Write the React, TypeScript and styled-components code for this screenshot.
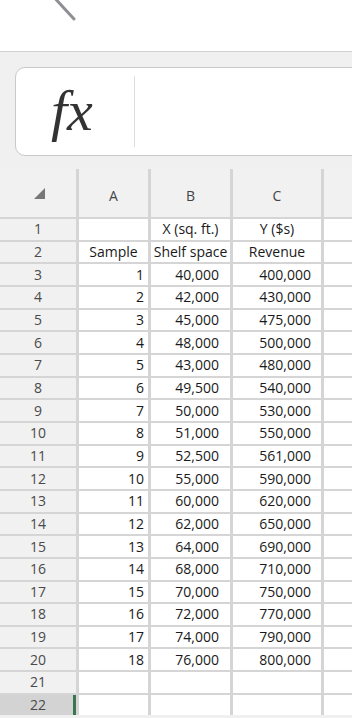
import React from "react";
import styled, { createGlobalStyle } from "styled-components";

const GlobalStyle = createGlobalStyle`
  html, body {
    margin: 0;
    padding: 0;
    background: #ffffff;
    overflow: hidden;
  }
  body {
    font-family: "Open Sans", "Noto Sans", sans-serif;
  }
`;

const Page = styled.div`
  width: 352px;
  height: 718px;
  overflow: hidden;
  display: flex;
  flex-direction: column;
  background: #f0f0f0;
`;

const TopBar = styled.div`
  height: 52px;
  flex-shrink: 0;
  background: #ffffff;
  border-bottom: 1px solid #d2d2d2;
  padding-left: 50px;
  box-sizing: border-box;
`;

const FormulaArea = styled.div`
  flex-shrink: 0;
  padding: 15px 0 13px 15px;
  display: flex;
`;

const FormulaBox = styled.div`
  width: 360px;
  flex-shrink: 0;
  height: 89px;
  box-sizing: border-box;
  background: #ffffff;
  border: 1.5px solid #c9c9c9;
  border-radius: 10px;
  display: flex;
  align-items: center;
`;

const FxLabel = styled.div`
  width: 118px;
  height: 100%;
  box-sizing: border-box;
  padding-left: 35px;
  padding-bottom: 2px;
  display: flex;
  align-items: center;
  font-family: "Liberation Serif", "DejaVu Serif", serif;
  font-style: italic;
  font-size: 58px;
  color: #333333;
`;

const Divider = styled.div`
  width: 1px;
  height: 71px;
  background: #dddddd;
`;

const Sheet = styled.div`
  display: grid;
  grid-template-columns: 76px 69px 79px 88px 1fr;
  grid-template-rows: 48px;
  grid-auto-rows: 20.67px;
  column-gap: 3px;
  row-gap: 2px;
  background: #d5d5d5;
  flex-shrink: 0;
`;

const Corner = styled.div`
  background: #f1f1f1;
  display: flex;
  align-items: center;
  justify-content: flex-start;
  padding-left: 34px;
`;

const ColHead = styled.div`
  background: #f1f1f1;
  color: #444444;
  font-size: 14px;
  display: flex;
  align-items: center;
  justify-content: center;
  padding-top: 4px;
`;

const RowHead = styled.div<{ $selected?: boolean }>`
  position: relative;
  background: ${(p) => (p.$selected ? "#d3d3d3" : "#f1f1f1")};
  color: #4a4a4a;
  font-size: 14px;
  display: flex;
  align-items: center;
  justify-content: center;
  line-height: 1;
  ${(p) =>
    p.$selected &&
    `
    &::after {
      content: "";
      position: absolute;
      right: 0;
      top: 0;
      bottom: 0;
      width: 3px;
      background: #3a7650;
    }
  `}
`;

const Cell = styled.div<{ $align?: "center" | "right"; $pad?: number }>`
  background: #ffffff;
  color: #1a1a1a;
  font-size: 14px;
  line-height: 1;
  display: flex;
  align-items: center;
  white-space: nowrap;
  overflow: hidden;
  justify-content: ${(p) => (p.$align === "right" ? "flex-end" : "center")};
  padding-right: ${(p) => (p.$align === "right" ? p.$pad ?? 4 : 0)}px;
`;

const data: [string, string][] = [
  ["40,000", "400,000"],
  ["42,000", "430,000"],
  ["45,000", "475,000"],
  ["48,000", "500,000"],
  ["43,000", "480,000"],
  ["49,500", "540,000"],
  ["50,000", "530,000"],
  ["51,000", "550,000"],
  ["52,500", "561,000"],
  ["55,000", "590,000"],
  ["60,000", "620,000"],
  ["62,000", "650,000"],
  ["64,000", "690,000"],
  ["68,000", "710,000"],
  ["70,000", "750,000"],
  ["72,000", "770,000"],
  ["74,000", "790,000"],
  ["76,000", "800,000"],
];

const App = () => {
  return (
    <Page>
      <GlobalStyle />
      <TopBar>
        <svg width="34" height="24" viewBox="0 0 34 24">
          <line x1="1" y1="-6" x2="24" y2="19" stroke="#8e8e93" strokeWidth="3" strokeLinecap="round" />
        </svg>
      </TopBar>
      <FormulaArea>
        <FormulaBox>
          <FxLabel>fx</FxLabel>
          <Divider />
        </FormulaBox>
      </FormulaArea>
      <Sheet>
        <Corner>
          <svg width="12" height="11" viewBox="0 0 12 11">
            <polygon points="0,11 11,0 11,11" fill="#777777" />
          </svg>
        </Corner>
        <ColHead>A</ColHead>
        <ColHead>B</ColHead>
        <ColHead>C</ColHead>
        <ColHead />

        <RowHead>1</RowHead>
        <Cell />
        <Cell>X (sq. ft.)</Cell>
        <Cell>Y ($s)</Cell>
        <Cell />

        <RowHead>2</RowHead>
        <Cell>Sample</Cell>
        <Cell>Shelf space</Cell>
        <Cell>Revenue</Cell>
        <Cell />

        {data.map(([x, y], i) => (
          <React.Fragment key={i}>
            <RowHead>{i + 3}</RowHead>
            <Cell $align="right" $pad={4}>{i + 1}</Cell>
            <Cell $align="right" $pad={11}>{x}</Cell>
            <Cell $align="right" $pad={10}>{y}</Cell>
            <Cell />
          </React.Fragment>
        ))}

        <RowHead>21</RowHead>
        <Cell />
        <Cell />
        <Cell />
        <Cell />

        <RowHead $selected>22</RowHead>
        <Cell />
        <Cell />
        <Cell />
        <Cell />
      </Sheet>
    </Page>
  );
};

export default App;
